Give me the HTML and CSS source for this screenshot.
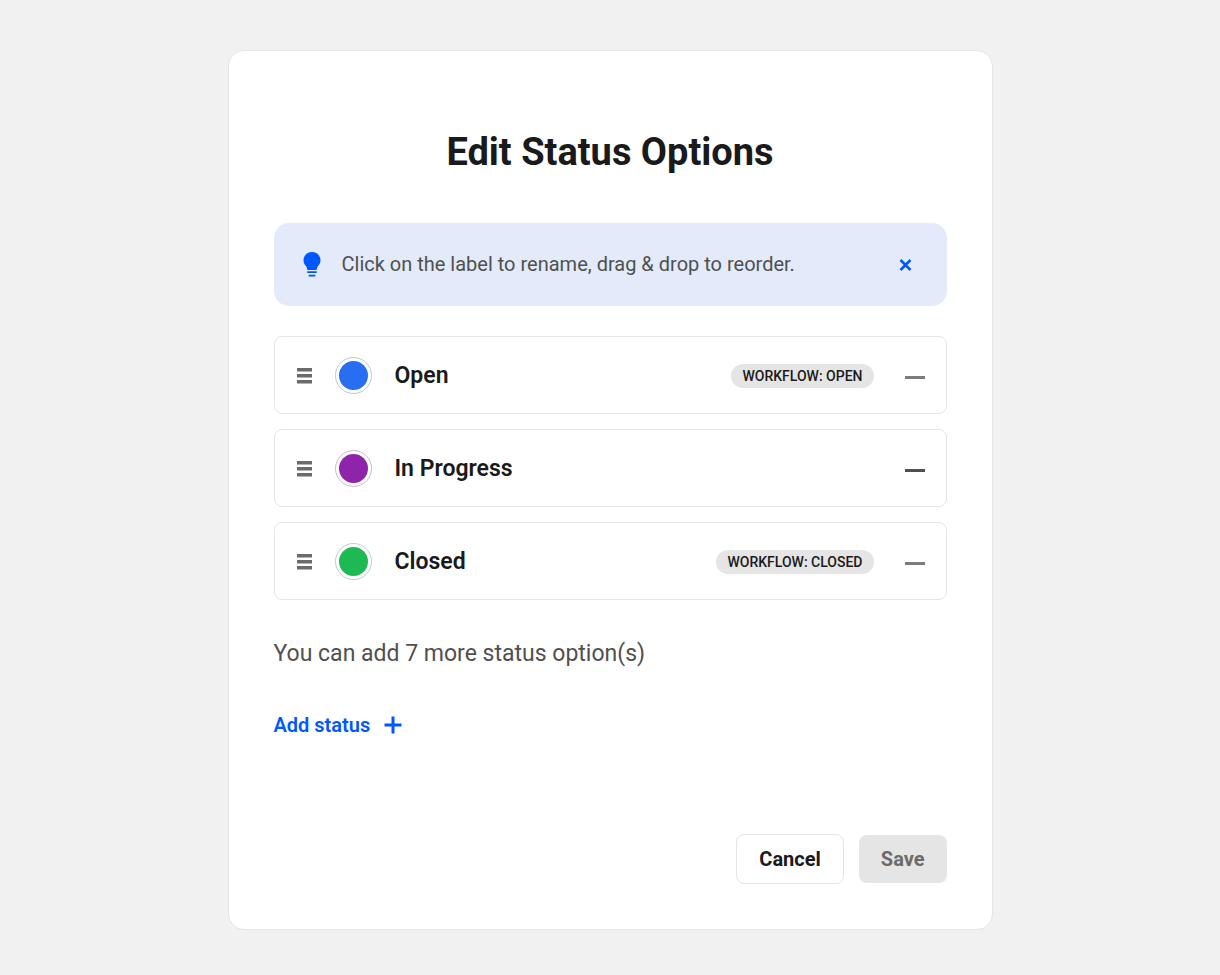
FILE: index.html
```html
<!DOCTYPE html>
<html lang="en">
<head>
    <meta charset="UTF-8">
    <meta name="viewport" content="width=device-width, initial-scale=1.0">
    <title>Edit Status Options</title>
    <link rel="stylesheet" href="styles.css">
</head>
<body>
    <main class="dialog">
        <h1>Edit Status Options</h1>

        <div class="tip">
            <svg class="tip-icon" width="18" height="26" viewBox="0 0 18 26" aria-hidden="true">
                <path d="M9 0C4.200 0 0.500 3.700 0.500 8.200C0.500 11 2 13 3.300 14.500C4 15.500 4 16.500 4 17.200Q4.200 18 5 18H13Q13.800 18 14 17.200C14 16.500 14 15.500 14.700 14.500C16 13 17.500 11 17.500 8.200C17.500 3.700 13.800 0 9 0Z"/>
                <rect x="4" y="19.300" width="10" height="1.700" rx="0.800"/>
                <rect x="5.500" y="22.800" width="7" height="1.700" rx="0.800"/>
            </svg>
            <p>Click on the label to rename, drag &amp; drop to reorder.</p>
            <button class="tip-close" type="button" aria-label="Dismiss">
                <svg width="13" height="12" viewBox="0 0 13 12"><path d="M1.500 1L11.500 11M11.500 1L1.500 11"/></svg>
            </button>
        </div>

        <ul class="status-list">
            <li class="status">
                <button class="handle" type="button" aria-label="Reorder Open">
                    <svg width="15" height="16" viewBox="0 0 15 16"><path d="M0 0h15v3.500H0zM0 6h15v3.500H0zM0 12h15v3.500H0z"/></svg>
                </button>
                <button class="swatch blue" type="button" aria-label="Color of Open"></button>
                <button class="label" type="button">Open</button>
                <span class="badge">Workflow: Open</span>
                <button class="remove" type="button" aria-label="Remove Open" disabled></button>
            </li>
            <li class="status">
                <button class="handle" type="button" aria-label="Reorder In Progress">
                    <svg width="15" height="16" viewBox="0 0 15 16"><path d="M0 0h15v3.500H0zM0 6h15v3.500H0zM0 12h15v3.500H0z"/></svg>
                </button>
                <button class="swatch purple" type="button" aria-label="Color of In Progress"></button>
                <button class="label" type="button">In Progress</button>
                <button class="remove" type="button" aria-label="Remove In Progress"></button>
            </li>
            <li class="status">
                <button class="handle" type="button" aria-label="Reorder Closed">
                    <svg width="15" height="16" viewBox="0 0 15 16"><path d="M0 0h15v3.500H0zM0 6h15v3.500H0zM0 12h15v3.500H0z"/></svg>
                </button>
                <button class="swatch green" type="button" aria-label="Color of Closed"></button>
                <button class="label" type="button">Closed</button>
                <span class="badge">Workflow: Closed</span>
                <button class="remove" type="button" aria-label="Remove Closed" disabled></button>
            </li>
        </ul>

        <p class="remaining">You can add 7 more status option(s)</p>
        <button class="add" type="button">
            Add status
            <svg width="18" height="18" viewBox="0 0 18 18" aria-hidden="true"><path d="M9 0.500V17.500M0.500 9H17.500"/></svg>
        </button>

        <div class="actions">
            <button class="btn cancel" type="button">Cancel</button>
            <button class="btn save" type="button" disabled>Save</button>
        </div>
    </main>
</body>
</html>
```
FILE: styles.css
```css
* {
    box-sizing: border-box;
}
body {
    margin: 0;
    padding: 50px 20px 45px;
    background-color: #f1f1f1;
    color: #1a1a1a;
    font-family: Roboto, sans-serif;
}
button {
    padding: 0;
    border: none;
    background: none;
    color: inherit;
    font: inherit;
    cursor: pointer;
}
button:disabled {
    cursor: default;
}
svg {
    display: block;
}
.dialog {
    max-width: 765px;
    margin: 0 auto;
    padding: 76px 45px 45px;
    background-color: #ffffff;
    border: 1px solid #e5e5e5;
    border-radius: 16px;
}
h1 {
    margin: 0 0 46px;
    font-size: 38px;
    font-weight: 700;
    line-height: 50px;
    text-align: center;
}

/* Tip banner */
.tip {
    display: flex;
    align-items: center;
    padding: 28px 35px 28px 29px;
    margin-bottom: 30px;
    background-color: #e3eafa;
    border-radius: 15px;
}
.tip-icon {
    fill: #0057ff;
}
.tip p {
    flex: 1;
    margin: 0 0 0 21px;
    color: #505050;
    font-size: 20px;
    line-height: 27px;
}
.tip-close path {
    fill: none;
    stroke: #0057ff;
    stroke-width: 2.5;
}

/* Status rows */
.status-list {
    display: flex;
    flex-direction: column;
    gap: 15px;
    margin: 0 0 38px;
    padding: 0;
    list-style: none;
}
.status {
    display: flex;
    align-items: center;
    padding: 20px 21px 19px 22px;
    border: 1px solid #e5e5e5;
    border-radius: 8px;
}
.handle {
    margin-right: 23px;
    fill: #6b6b6b;
    cursor: grab;
}
.swatch {
    width: 37px;
    height: 37px;
    border: 1px solid #cccccc;
    border-radius: 50%;
    padding: 3px;
    background-clip: content-box;
}
.blue {
    border-color: #b9c6e4;
    background-color: #276ef1;
}
.purple {
    border-color: #cdb6d4;
    background-color: #8e24aa;
}
.green {
    border-color: #b4d4c0;
    background-color: #1db954;
}
.label {
    margin: 0 auto 0 23px;
    font-size: 23px;
    font-weight: 600;
    line-height: 30px;
}
.badge {
    padding: 0 11px;
    margin-right: 31px;
    background-color: #e5e5e5;
    border-radius: 12px;
    font-size: 14px;
    font-weight: 500;
    line-height: 24px;
    text-transform: uppercase;
}
.remove {
    width: 20px;
    height: 16px;
    padding: 8px 0 5px;
    background-color: #505050;
    background-clip: content-box;
}
.remove:disabled {
    background-color: #7c7c7c;
}

.remaining {
    margin: 0 0 40px;
    color: #505050;
    font-size: 23px;
    line-height: 32px;
}
.add {
    display: flex;
    align-items: center;
    gap: 14px;
    color: #0057ff;
    font-size: 20px;
    font-weight: 600;
    line-height: 30px;
}
.add path {
    stroke: #0057ff;
    stroke-width: 3;
}
.actions {
    display: flex;
    justify-content: flex-end;
    align-items: center;
    gap: 15px;
    margin-top: 94px;
}
.btn {
    padding: 9px 22px;
    border-radius: 8px;
    font-size: 20px;
    font-weight: 700;
    line-height: 30px;
}
.cancel {
    border: 1px solid #e5e5e5;
}
.save {
    background-color: #e5e5e5;
    color: #6b6b6b;
}
```
